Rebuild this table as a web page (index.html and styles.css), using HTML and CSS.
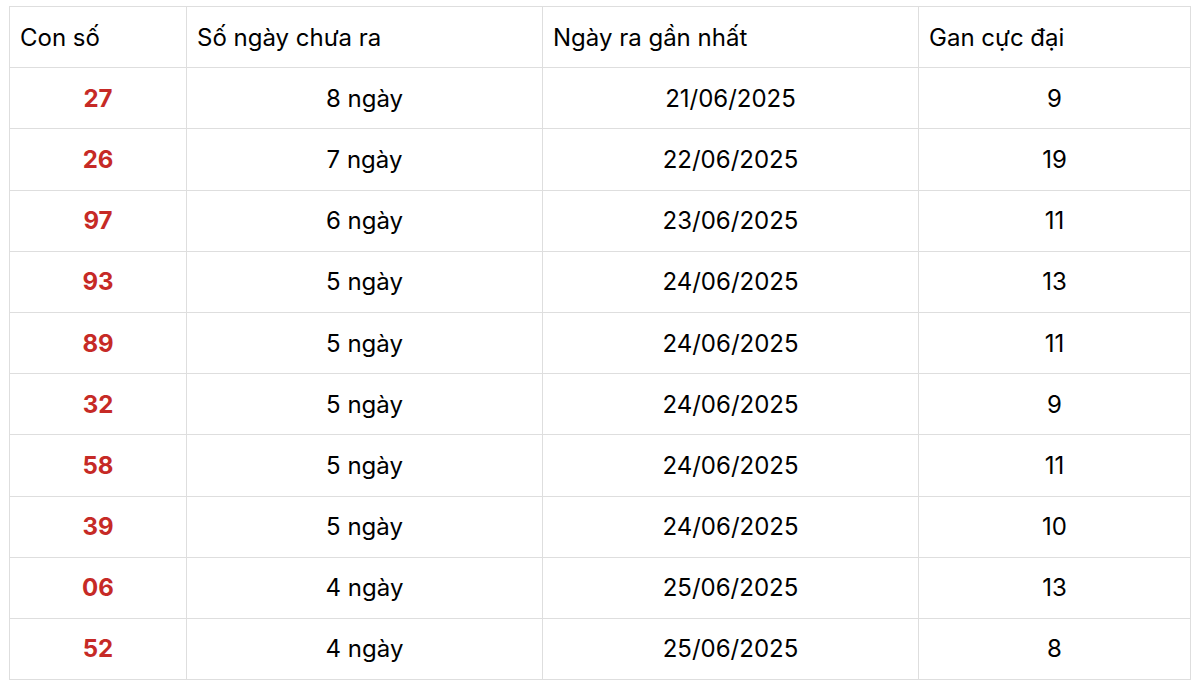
FILE: index.html
```html
<!DOCTYPE html>
<html lang="vi">
<head>
<meta charset="utf-8">
<title>Lô gan</title>
<link rel="stylesheet" href="styles.css">
</head>
<body>
<table class="gan-table">
  <colgroup>
    <col class="c1"><col class="c2"><col class="c3"><col class="c4">
  </colgroup>
  <thead>
    <tr><th>Con số</th><th>Số ngày chưa ra</th><th>Ngày ra gần nhất</th><th>Gan cực đại</th></tr>
  </thead>
  <tbody>
    <tr><td class="num">27</td><td>8 ngày</td><td>21/06/2025</td><td>9</td></tr>
    <tr><td class="num">26</td><td>7 ngày</td><td>22/06/2025</td><td>19</td></tr>
    <tr><td class="num">97</td><td>6 ngày</td><td>23/06/2025</td><td>11</td></tr>
    <tr><td class="num">93</td><td>5 ngày</td><td>24/06/2025</td><td>13</td></tr>
    <tr><td class="num">89</td><td>5 ngày</td><td>24/06/2025</td><td>11</td></tr>
    <tr><td class="num">32</td><td>5 ngày</td><td>24/06/2025</td><td>9</td></tr>
    <tr><td class="num">58</td><td>5 ngày</td><td>24/06/2025</td><td>11</td></tr>
    <tr><td class="num">39</td><td>5 ngày</td><td>24/06/2025</td><td>10</td></tr>
    <tr><td class="num">06</td><td>4 ngày</td><td>25/06/2025</td><td>13</td></tr>
    <tr><td class="num">52</td><td>4 ngày</td><td>25/06/2025</td><td>8</td></tr>
  </tbody>
</table>
</body>
</html>
```
FILE: styles.css
```css
html, body {
  margin: 0;
  padding: 0;
  background: #fff;
}
body {
  padding: 6px 10px 0 9px;
  font-family: Inter, "Liberation Sans", sans-serif;
  color: #000;
}
.gan-table {
  border-collapse: collapse;
  width: 1181px;
  table-layout: fixed;
  font-size: 24px;
}
.c1 { width: 177px; }
.c2 { width: 356px; }
.c3 { width: 376px; }
.c4 { width: 272px; }
.gan-table th,
.gan-table td {
  border: 1px solid #dedede;
  height: 61.2px;
  padding: 0 11px;
  box-sizing: border-box;
  vertical-align: middle;
}
.gan-table th {
  text-align: left;
  font-weight: 400;
  padding-left: 10px;
}
.gan-table td {
  text-align: center;
}
.gan-table td.num {
  color: #c62a26;
  font-weight: 700;
}
```
